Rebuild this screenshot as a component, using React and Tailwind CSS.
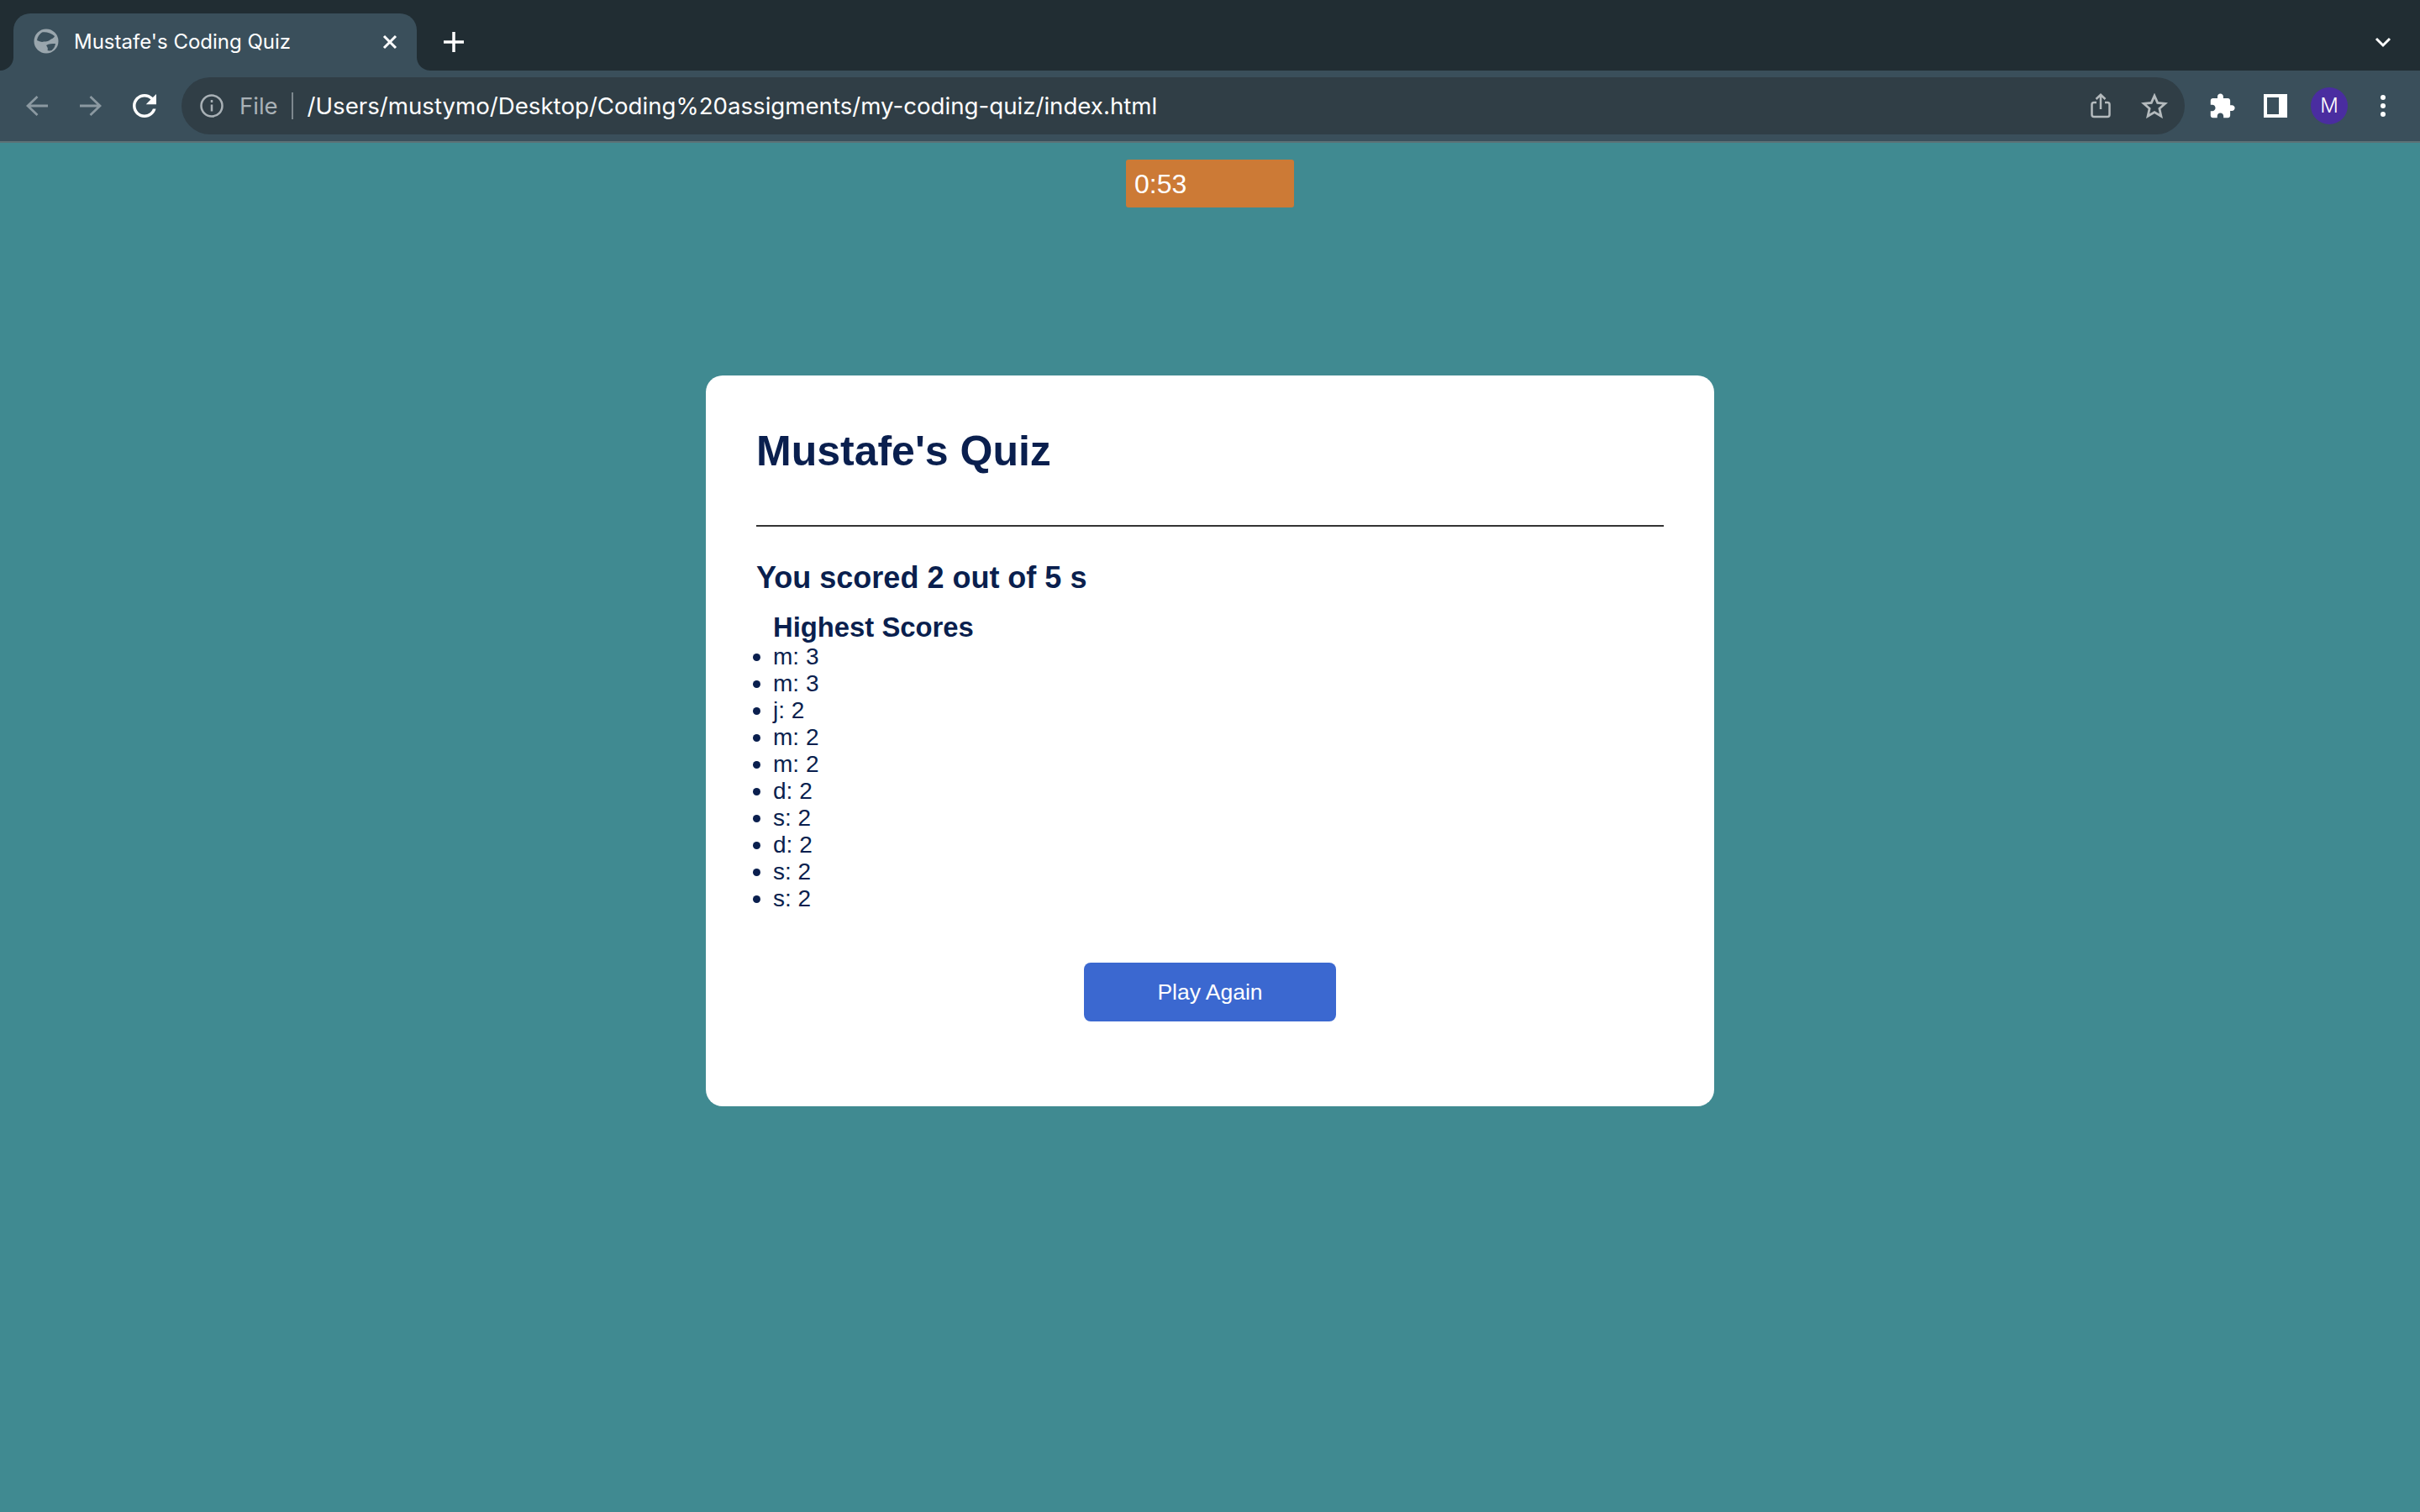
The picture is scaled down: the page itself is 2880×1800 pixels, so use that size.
import React from 'react';

const scores = ['m: 3', 'm: 3', 'j: 2', 'm: 2', 'm: 2', 'd: 2', 's: 2', 'd: 2', 's: 2', 's: 2'];

const BackIcon = ({ flip }) => (
  <svg width="26" height="26" viewBox="0 0 26 26" fill="none" stroke="#8b99a1" strokeWidth="2.800" className={flip ? 'rotate-180' : ''}>
    <path d="M26 13H2M13.500 2L2 13l11.500 11" />
  </svg>
);

const Tab = () => (
  <div className="relative ml-4 mt-4 flex h-[68px] w-[480px] items-center rounded-t-[20px] bg-[#3a4f5b] pl-6 pr-5">
    {/* flared bottom corners of the tab */}
    <div className="absolute bottom-0 left-[-16px] h-4 w-4 bg-[#3a4f5b]">
      <div className="h-full w-full rounded-br-[16px] bg-[#212d33]" />
    </div>
    <div className="absolute bottom-0 right-[-16px] h-4 w-4 bg-[#3a4f5b]">
      <div className="h-full w-full rounded-bl-[16px] bg-[#212d33]" />
    </div>
    <svg width="30" height="30" viewBox="0 0 30 30" className="mt-[-2px] shrink-0">
      <circle cx="15" cy="15" r="14.500" fill="#9aa6ad" />
      <path d="M10 4.500C14 3.500 21 5 25 9c-1 3-4 3-6 5-3 2-6 1-9 2-2-.5-4-1-6-2 .500-4 3-7.500 6-9.500z" fill="#3a4f5b" />
      <path d="M15 20c3-2 7-2 11-2-.5 3-2 6-4.500 8-2 .5-3.500 .5-5 0 1-2 0-4-1.500-6z" fill="#3a4f5b" />
    </svg>
    <span className="ml-[18px] text-[24px] text-white">Mustafe's Coding Quiz</span>
    <svg width="18" height="18" viewBox="0 0 18 18" stroke="#fff" strokeWidth="3" className="ml-auto mr-[3px]">
      <path d="M2 2l14 14M16 2L2 16" />
    </svg>
  </div>
);

const Toolbar = () => (
  <div className="flex h-[84px] items-center bg-[#3a4f5b] px-3">
    <div className="flex h-16 w-16 items-center justify-center"><BackIcon /></div>
    <div className="flex h-16 w-16 items-center justify-center"><BackIcon flip /></div>
    <div className="flex h-16 w-16 items-center justify-center">
      <svg width="42" height="42" viewBox="0 0 24 24" fill="#fff">
        <path d="M17.65 6.35C16.2 4.9 14.21 4 12 4c-4.42 0-7.99 3.58-7.99 8s3.57 8 7.99 8c3.73 0 6.84-2.55 7.73-6h-2.08c-.82 2.33-3.04 4-5.65 4-3.31 0-6-2.69-6-6s2.69-6 6-6c1.66 0 3.14.69 4.22 1.78L13 11h7V4l-2.35 2.35z" />
      </svg>
    </div>

    <div className="ml-3 flex h-[68px] flex-1 items-center rounded-[34px] bg-[#303e46] pr-1">
      <svg width="28" height="28" viewBox="0 0 28 28" fill="none" stroke="#a9b1b6" strokeWidth="2.5" className="ml-[22px] shrink-0">
        <circle cx="14" cy="14" r="12.5" />
        <path d="M14 12.5v8M14 7v3" />
      </svg>
      <span className="ml-[19px] mt-[1px] text-[27.5px] text-[#a9b1b6]">File</span>
      <div className="ml-[16px] h-8 w-[2px] bg-[#7d888e]" />
      <span className="ml-[17px] mt-[1px] text-[27.650px] text-white">/Users/mustymo/Desktop/Coding%20assigments/my-coding-quiz/index.html</span>
      <div className="ml-auto flex h-16 w-16 items-center justify-center">
        <svg width="24" height="30" viewBox="0 0 24 30" fill="none" stroke="#b4babd" strokeWidth="2.5">
          <path d="M7 11H4a2.5 2.5 0 0 0-2.5 2.5v12A2.5 2.5 0 0 0 4 28h16a2.5 2.5 0 0 0 2.5-2.5v-12A2.5 2.5 0 0 0 20 11h-3" />
          <path d="M12 19V2M6.500 7L12 1.800 17.500 7" />
        </svg>
      </div>
      <div className="flex h-16 w-16 items-center justify-center">
        <svg width="32" height="30" viewBox="0 0 32 30" fill="none" stroke="#b4babd" strokeWidth="2.8">
          <path d="M16 3l3.700 8.400 9.100.9-6.900 6 2 9-7.900-4.700-7.900 4.700 2-9-6.900-6 9.100-.9z" />
        </svg>
      </div>
    </div>

    <div className="ml-3 flex h-16 w-16 items-center justify-center">
      <svg width="33" height="33" viewBox="0 0 24 24" fill="#fff">
        <path d="M20.5 11H19V7c0-1.100-.9-2-2-2h-4V3.500C13 2.120 11.880 1 10.500 1S8 2.120 8 3.500V5H4c-1.100 0-1.990.9-1.990 2v3.800H3.500c1.490 0 2.700 1.210 2.700 2.700s-1.210 2.700-2.700 2.700H2V20c0 1.100.9 2 2 2h3.800v-1.500c0-1.490 1.210-2.700 2.700-2.700 1.490 0 2.700 1.210 2.700 2.700V22H17c1.100 0 2-.9 2-2v-4h1.500c1.380 0 2.500-1.120 2.500-2.500S21.880 11 20.500 11z" />
      </svg>
    </div>
    <div className="flex h-16 w-16 items-center justify-center">
      <div className="flex h-7 w-7 bg-white p-1 pr-[10px]">
        <div className="h-full w-full bg-[#3a4f5b]" />
      </div>
    </div>
    <div className="flex h-16 w-16 items-center justify-center">
      <div className="flex h-11 w-11 items-center justify-center rounded-full bg-[#4a2da0] text-[24px] font-light text-white">M</div>
    </div>
    <div className="flex h-16 w-16 flex-col items-center justify-center gap-1">
      <div className="h-[6px] w-[6px] rounded-full bg-white" />
      <div className="h-[6px] w-[6px] rounded-full bg-white" />
      <div className="h-[6px] w-[6px] rounded-full bg-white" />
    </div>
  </div>
);

export default function App() {
  return (
    <div className="flex min-h-screen flex-col bg-[#408a91] font-['Liberation_Sans',sans-serif]">
      <div className="font-['Inter',sans-serif]">
        <div className="flex h-[84px] items-start bg-[#212d33] pr-3">
          <Tab />
          <svg width="26" height="26" viewBox="0 0 26 26" stroke="#fff" strokeWidth="3.500" className="ml-[31px] mt-[37px]">
            <path d="M13 1v24M1 13h24" />
          </svg>
          <div className="ml-auto mt-[43px] flex w-16 justify-center">
            <svg width="20" height="14" viewBox="0 0 20 14" fill="none" stroke="#fff" strokeWidth="3">
              <path d="M2 3l8 8 8-8" />
            </svg>
          </div>
        </div>
        <Toolbar />
        <div className="h-[2px] bg-[#5d7176]" />
      </div>

      <div className="flex flex-col items-center">
        <div className="mt-5 flex h-[57px] w-[200px] items-center rounded-[3px] bg-[#cc7a36] pl-[10px] text-[32px] text-white">0:53</div>

        <div className="mt-[200px] h-[870px] w-[1200px] rounded-[20px] bg-white px-[60px] pt-[61px] text-[#0a1f4e]">
          <h1 className="text-[50px] font-bold leading-[58px]">Mustafe's Quiz</h1>
          <div className="mt-[59px] h-[2px] bg-[#333333]" />
          <h2 className="mt-[38px] text-[36px] font-bold leading-[45px]">You scored 2 out of 5 s</h2>
          <ul className="mt-[18px] pl-[20px] text-[28px] leading-[32px]">
            <div className="text-[32.800px] font-bold leading-[38px]">Highest Scores</div>
            {scores.map((score, i) => (
              <li key={i} className="relative before:absolute before:left-[-24px] before:top-[12px] before:h-[9px] before:w-[9px] before:rounded-full before:bg-[#0a1f4e]">{score}</li>
            ))}
          </ul>
          <div className="mt-[60px] flex justify-center">
            <button className="h-[70px] w-[300px] rounded-lg bg-[#3b68d0] pt-[2px] text-[26.500px] text-white">Play Again</button>
          </div>
        </div>
      </div>
    </div>
  );
}
